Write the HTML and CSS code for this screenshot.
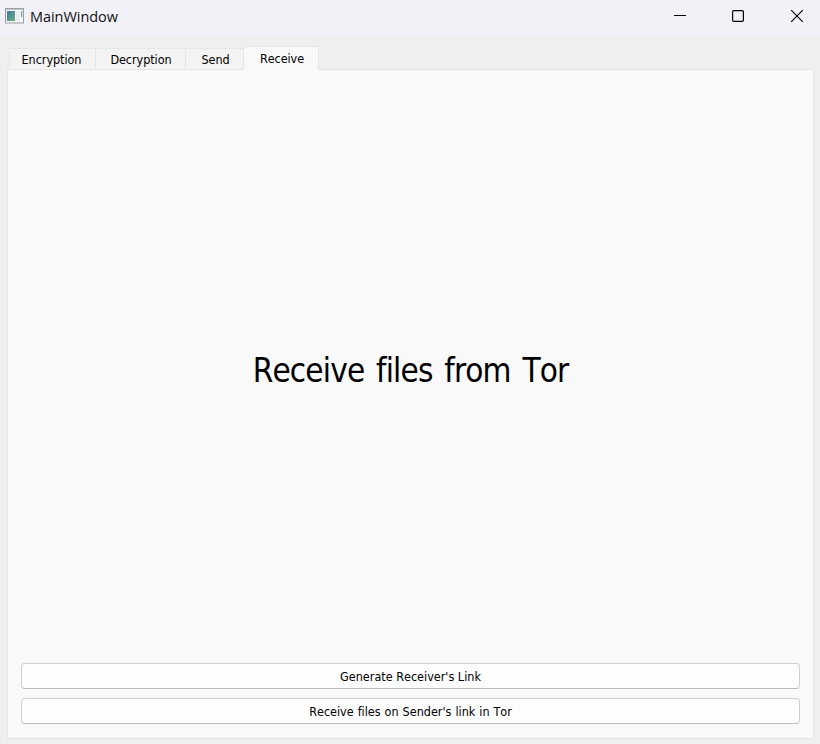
FILE: index.html
```html
<!DOCTYPE html>
<html lang="en">
<head>
<meta charset="utf-8">
<title>MainWindow</title>
<link rel="stylesheet" href="styles.css">
</head>
<body>
<div class="window">
  <header class="titlebar">
    <svg class="app-icon" width="19" height="16" viewBox="0 0 19 16">
      <defs>
        <linearGradient id="pane" x1="0" y1="0" x2="1" y2="1">
          <stop offset="0" stop-color="#4678a0"/><stop offset="1" stop-color="#64b482"/>
        </linearGradient>
      </defs>
      <rect x=".5" y=".5" width="18" height="14.5" fill="#f6f7f8" stroke="#9a9ea5"/>
      <path d="M1 1.5h17" stroke="#c3c7cc"/>
      <rect x="2" y="3" width="8" height="10" fill="url(#pane)"/>
      <rect x="11" y="3" width="3.5" height="10" fill="#e9ebed"/>
      <rect x="16" y="3" width="1.2" height="6" fill="#6aa596"/>
    </svg>
    <h1 class="title"><span>MainWindow</span></h1>
    <div class="controls">
      <svg width="14" height="14" viewBox="0 0 14 14"><path d="M1 6.5h12" stroke="#000"/></svg>
      <svg width="14" height="14" viewBox="0 0 14 14"><rect x="1.6" y="1.6" width="10.8" height="10.8" rx="1.2" fill="none" stroke="#000" stroke-width="1.2"/></svg>
      <svg width="14" height="14" viewBox="0 0 14 14"><path d="M1.2 1.2l11.6 11.6M12.8 1.2L1.2 12.8" stroke="#000" stroke-width="1.15"/></svg>
    </div>
  </header>
  <main class="content">
    <nav class="tabs">
      <div class="tab encryption"><span>Encryption</span></div>
      <div class="tab decryption"><span>Decryption</span></div>
      <div class="tab send"><span>Send</span></div>
      <div class="tab receive active"><span>Receive</span></div>
    </nav>
    <section class="panel">
      <div class="heading"><span>Receive files from Tor</span></div>
      <button class="button"><span class="generate">Generate Receiver's Link</span></button>
      <button class="button"><span class="from-sender">Receive files on Sender's link in Tor</span></button>
    </section>
  </main>
</div>
</body>
</html>
```
FILE: styles.css
```css
* { box-sizing: border-box; }
body {
  margin: 0;
  font-family: "DejaVu Sans Condensed", "DejaVu Sans", sans-serif;
  font-stretch: condensed;
  font-size: 12.5px;
  font-kerning: none;
  font-variant-ligatures: none;
  color: #000;
}
.window {
  width: 820px;
  height: 744px;
  display: flex;
  flex-direction: column;
  background: #efefef;
}
.titlebar {
  height: 35px;
  flex: none;
  display: flex;
  align-items: flex-start;
  padding: 8px 16px 0 5px;
  background: #f2f1f8;
}
.title {
  margin: -1px 0 0 6px;
  font: 400 14.5px/20px "Open Sans", sans-serif;
  letter-spacing: -0.05px;
  color: #111;
}
.controls {
  display: flex;
  gap: 44px;
  margin: 1px 0 0 auto;
}
.controls svg { display: block; }
.controls svg:last-child { margin-left: 1px; }
.content {
  flex: 1;
  display: flex;
  flex-direction: column;
  padding: 11px 6px 5px 7px;
}
.tabs {
  display: flex;
  align-items: flex-end;
  height: 24px;
  padding-left: 2px;
  margin-bottom: -1px;
  position: relative;
}
.tab {
  height: 22px;
  border: 1px solid #e5e5e5;
  border-right: 0;
  background: #f3f3f3;
  line-height: 22px;
  text-align: center;
  letter-spacing: -0.05px;
}
.encryption { width: 86px; padding-right: 2px; }
.decryption { width: 90px; padding-left: 1px; }
.send { width: 58px; padding-left: 2px; }
.receive { width: 76px; padding-left: 2px; }
.tab.active {
  height: 24px;
  border-right: 1px solid #e5e5e5;
  border-bottom: 0;
  border-radius: 2px 2px 0 0;
  background: #f9f9f9;
  line-height: 24px;
}
.panel {
  flex: 1;
  display: flex;
  flex-direction: column;
  gap: 9px;
  padding: 13px 13px 14px;
  border: 1px solid #e5e5e5;
  background: #f9f9f9;
}
.heading {
  flex: 1;
  display: flex;
  align-items: center;
  justify-content: center;
  padding-top: 3px;
  font-size: 33px;
  letter-spacing: -0.85px;
  word-spacing: 3.2px;
}
.button {
  height: 26px;
  padding: 1px 0 0;
  border: 1px solid #d0d0d0;
  border-bottom-color: #b9b9b9;
  border-radius: 4px;
  background: #fdfdfd;
  font: inherit;
  font-kerning: none;
  font-variant-ligatures: none;
  color: inherit;
}
.from-sender {
  word-spacing: 0.4px;
}
```
